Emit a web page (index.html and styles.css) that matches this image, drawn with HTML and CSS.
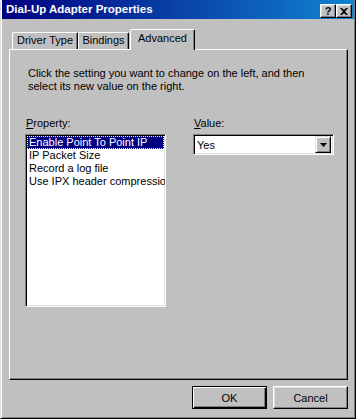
FILE: index.html
```html
<!DOCTYPE html>
<html lang="en">
<head>
<meta charset="UTF-8">
<meta name="viewport" content="width=device-width, initial-scale=1.0">
<title>Dial-Up Adapter Properties</title>
<link rel="stylesheet" href="styles.css">
</head>
<body>
    <div class="window">
        <div class="titlebar">
            <span class="title">Dial-Up Adapter Properties</span>
            <div class="title-buttons">
                <button type="button" class="cap-btn">?</button>
                <button type="button" class="cap-btn">
                    <svg width="8" height="7" viewBox="0 0 8 7"><path d="M0 0h2l2 2 2-2h2L5 3.5 8 7H6L4 5 2 7H0l3-3.5z" fill="#000"/></svg>
                </button>
            </div>
        </div>

        <div class="tabs">
            <div class="tab tab-driver">Driver Type</div>
            <div class="tab tab-bindings">Bindings</div>
            <div class="tab tab-advanced active">Advanced</div>
        </div>

        <div class="panel">
            <p class="intro">Click the setting you want to change on the left, and then select its new value on the right.</p>
            <div class="fields">
                <div class="field">
                    <label class="field-label"><u>P</u>roperty:</label>
                    <div class="listbox">
                        <div class="list-item selected">Enable Point To Point IP</div>
                        <div class="list-item">IP Packet Size</div>
                        <div class="list-item">Record a log file</div>
                        <div class="list-item">Use IPX header compression</div>
                    </div>
                </div>
                <div class="field">
                    <label class="field-label"><u>V</u>alue:</label>
                    <div class="dropdown">
                        <span class="dropdown-value">Yes</span>
                        <span class="dropdown-arrow">
                            <svg width="7" height="4" viewBox="0 0 7 4"><path d="M0 0h7L3.5 4z" fill="#000"/></svg>
                        </span>
                    </div>
                </div>
            </div>
        </div>

        <div class="actions">
            <button type="button" class="btn default">OK</button>
            <button type="button" class="btn">Cancel</button>
        </div>
    </div>
</body>
</html>
```

FILE: styles.css
```css
* {
  box-sizing: border-box;
}
body {
  margin: 0;
  background-color: #c0c0c0;
  font-family: "Liberation Sans", Arial, sans-serif;
  font-size: 11px;
  color: #000000;
}
.window {
  width: 356px;
  height: 419px;
  display: flex;
  flex-direction: column;
  padding: 0 1px 1px 1px;
  border-left: 1px solid #dfdfdf;
  border-right: 1px solid #000000;
  border-bottom: 1px solid #000000;
  box-shadow: inset 1px 0 #ffffff, inset -1px -1px #808080;
  background-color: #c0c0c0;
}
.titlebar {
  height: 19px;
  display: flex;
  justify-content: space-between;
  align-items: flex-start;
  padding: 0 2px 0 4px;
  background: linear-gradient(to right, #000080, #1084d0);
}
.title {
  color: #ffffff;
  font-weight: bold;
  font-size: 11.5px;
  line-height: 19px;
}
.title-buttons {
  display: flex;
  margin-top: 4px;
}
.cap-btn {
  width: 16px;
  height: 14px;
  padding: 0;
  display: flex;
  align-items: center;
  justify-content: center;
  font-family: "Liberation Sans", Arial, sans-serif;
  font-size: 11px;
  font-weight: bold;
  line-height: 1;
  color: #000000;
  background-color: #c0c0c0;
  border: 1px solid;
  border-color: #ffffff #000000 #000000 #ffffff;
  box-shadow: inset -1px -1px #808080, inset 1px 1px #dfdfdf;
}

/* abas */
.tabs {
  display: flex;
  align-items: flex-end;
  margin-top: 10px;
  padding-left: 10px;
  height: 20px;
}
.tab {
  height: 17px;
  line-height: 15px;
  text-align: center;
  border: 1px solid;
  border-bottom: none;
  border-color: #ffffff #000000 transparent #ffffff;
  border-radius: 2px 2px 0 0;
  box-shadow: inset -1px 0 #808080;
}
.tab-driver {
  width: 66px;
}
.tab-bindings {
  width: 51px;
}
.tab-advanced {
  width: 65px;
  margin-left: 1px;
}
.tab.active {
  position: relative;
  z-index: 1;
  height: 21px;
  line-height: 17px;
  margin-bottom: -1px;
  background-color: #c0c0c0;
}

.panel {
  height: 331px;
  margin: 0 6px 0 7px;
  padding: 17px 15px;
  border: 1px solid;
  border-color: #ffffff #000000 #000000 #ffffff;
  box-shadow: inset -1px -1px #808080;
}
.intro {
  margin: 0 0 24px 3px;
  line-height: 13px;
}
.fields {
  display: flex;
  gap: 27px;
}
.field {
  display: flex;
  flex-direction: column;
}
.field-label {
  line-height: 13px;
  margin: 0 0 4px 1px;
}
.field-label u {
  text-decoration: underline;
}
.listbox {
  width: 141px;
  height: 173px;
  overflow: hidden;
  background-color: #ffffff;
  border: 1px solid;
  border-color: #808080 #ffffff #ffffff #808080;
  box-shadow: inset 1px 1px #000000, inset -1px -1px #dfdfdf;
  padding: 1px;
}
.list-item {
  height: 13px;
  line-height: 13px;
  padding-left: 2px;
  white-space: nowrap;
}
.list-item.selected {
  background-color: #000080;
  color: #ffffff;
  outline: 1px dotted #ffff99;
  outline-offset: -1px;
}
.dropdown {
  width: 141px;
  height: 21px;
  display: flex;
  align-items: center;
  justify-content: space-between;
  background-color: #ffffff;
  border: 1px solid;
  border-color: #808080 #ffffff #ffffff #808080;
  box-shadow: inset 1px 1px #000000, inset -1px -1px #dfdfdf;
  padding: 1px 2px 1px 3px;
}
.dropdown-arrow {
  width: 16px;
  height: 17px;
  display: flex;
  align-items: center;
  justify-content: center;
  background-color: #c0c0c0;
  border: 1px solid;
  border-color: #dfdfdf #000000 #000000 #dfdfdf;
  box-shadow: inset 1px 1px #ffffff, inset -1px -1px #808080;
}

.actions {
  display: flex;
  justify-content: flex-end;
  gap: 6px;
  margin-top: 6px;
  padding-right: 6px;
}
.btn {
  width: 75px;
  height: 23px;
  padding: 0;
  font-family: "Liberation Sans", Arial, sans-serif;
  font-size: 11px;
  color: #000000;
  background-color: #c0c0c0;
  border: 1px solid;
  border-color: #ffffff #000000 #000000 #ffffff;
  box-shadow: inset -1px -1px #808080, inset 1px 1px #dfdfdf;
}
.btn.default {
  border-color: #000000;
  box-shadow: inset 1px 1px #ffffff, inset -1px -1px #000000, inset -2px -2px #808080;
}
```
